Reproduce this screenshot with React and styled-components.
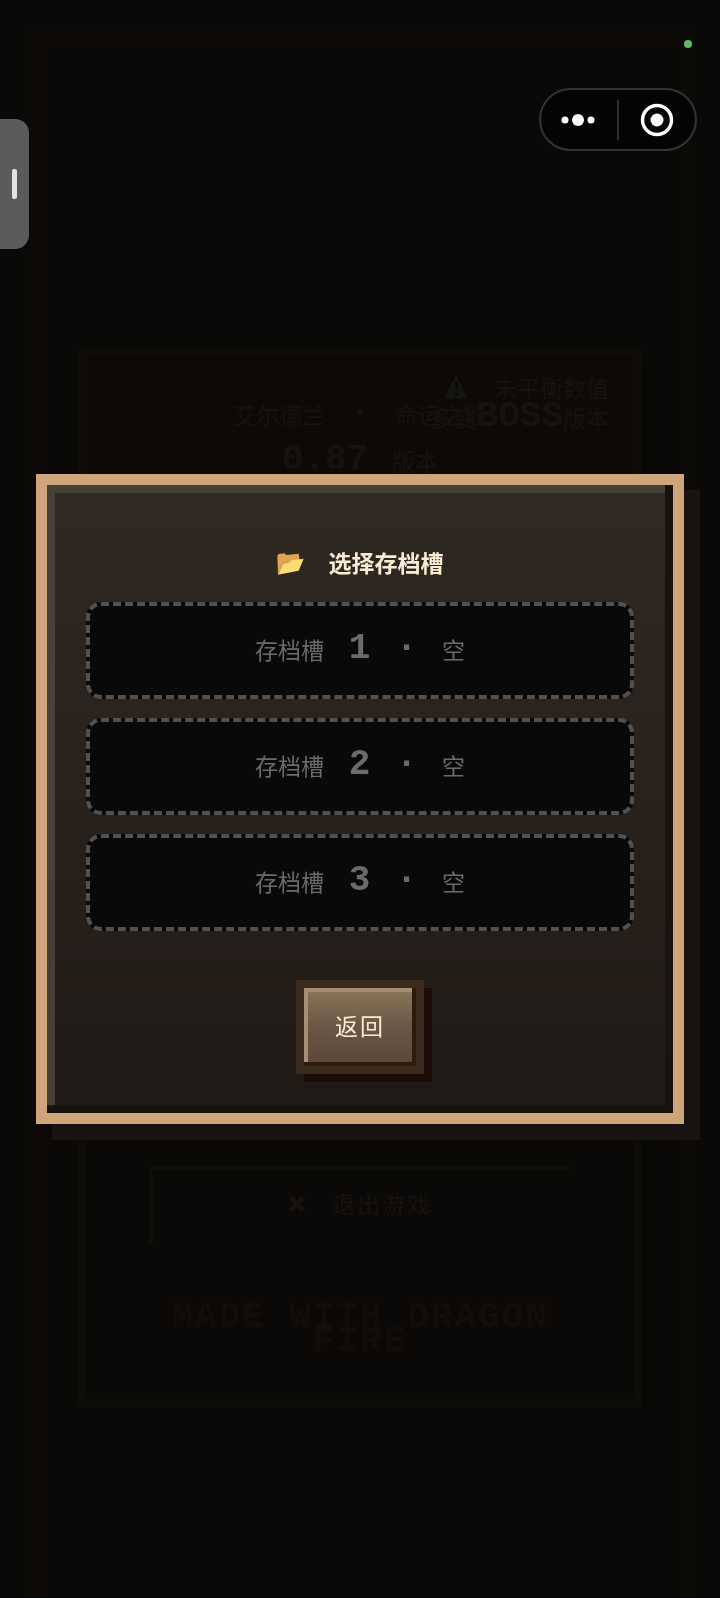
import React from 'react';
import styled, { createGlobalStyle, ThemeProvider } from 'styled-components';

const theme = {
  font: {
    text: "'Noto Sans CJK SC', sans-serif",
    pixel: "'Liberation Mono', 'Noto Sans CJK SC', monospace",
  },
  fontSize: {
    text: '23px',
    pixel: '36px',
  },
  colors: {
    page: '#0a0907',
    ghost: '#15120f',
    gold: '#cea67a',
    cream: '#f9ecd2',
    muted: '#6b6b6b',
  },
};

const GlobalStyle = createGlobalStyle`
  *, *::before, *::after {
    box-sizing: border-box;
  }

  body {
    margin: 0;
    background: #0a0907;
  }

  button {
    margin: 0;
    font: inherit;
    cursor: pointer;
  }
`;

/* ---------- start screen behind the dialog ---------- */

const Page = styled.div`
  min-height: 100vh;
  padding: 31px 30px 0;
  display: flex;
  overflow: hidden;
  background: ${({ theme }) => theme.colors.page};
  color: ${({ theme }) => theme.colors.ghost};
  font-family: ${({ theme }) => theme.font.text};
  font-size: ${({ theme }) => theme.fontSize.text};
`;

const Stage = styled.main`
  flex: 1;
  padding: 308px 40px 191px;
  display: flex;
  border: 8px solid #0d0b08;
  border-bottom: 0;
  box-shadow: inset 8px 8px 0 #0e0906;
`;

const Panel = styled.section`
  position: relative;
  flex: 1;
  padding: 36px 55px 45px;
  display: flex;
  flex-direction: column;
  justify-content: space-between;
  border: 8px solid #0d0c08;
  background: linear-gradient(#0d0906, #0a0907 40%);
  box-shadow: 16px 16px 0 #080807;
`;

const GameTitle = styled.h1`
  margin: 0;
  display: flex;
  flex-direction: column;
  font-size: inherit;
  font-weight: 400;
  line-height: 46px;
`;

const TitleLine = styled.span`
  display: flex;
  justify-content: center;
  align-items: center;
  gap: 24px;
`;

const Pixel = styled.span`
  font-family: ${({ theme }) => theme.font.pixel};
  font-size: ${({ theme }) => theme.fontSize.pixel};
  font-weight: 700;
`;

const VersionBadge = styled.div`
  position: absolute;
  top: 17px;
  right: 25px;
  display: flex;
  flex-direction: column;
  align-items: flex-end;
  line-height: 30px;
`;

const BadgeLine = styled.span`
  display: flex;
  align-items: center;
  gap: ${({ $gap }) => $gap || '0'};
`;

const PanelFooter = styled.footer`
  display: flex;
  flex-direction: column;
  gap: 54px;
`;

const ExitButton = styled.button`
  height: 94px;
  padding: 0 0 4px;
  display: flex;
  justify-content: center;
  align-items: center;
  gap: 26px;
  border: 8px solid #0a0907;
  background: #0a0907;
  color: inherit;
  letter-spacing: 2px;
  box-shadow: inset 4px 4px 0 #0f0e0b, 8px 8px 0 #080807;
`;

const Credit = styled.p`
  margin: 0;
  text-align: center;
  font-family: ${({ theme }) => theme.font.pixel};
  font-size: ${({ theme }) => theme.fontSize.pixel};
  font-weight: 700;
  line-height: 24px;
  letter-spacing: 2px;
  color: #110d0b;
`;

/* ---------- save slot dialog ---------- */

const Overlay = styled.div`
  position: fixed;
  inset: 0;
  padding: 0 36px;
  display: flex;
  align-items: center;
  font-family: ${({ theme }) => theme.font.text};
  font-size: ${({ theme }) => theme.fontSize.text};
`;

const Dialog = styled.div`
  flex: 1;
  padding: 39px;
  display: flex;
  flex-direction: column;
  border: 11px solid ${({ theme }) => theme.colors.gold};
  background: linear-gradient(#302822, #29211b 50%, #1f1a17);
  box-shadow: inset -8px -8px 0 #181310, inset 8px 8px 0 #474036, 16px 16px 0 #191411;
`;

const DialogTitle = styled.h2`
  margin: 20px 0 18px;
  display: flex;
  justify-content: center;
  align-items: center;
  gap: 24px;
  color: ${({ theme }) => theme.colors.cream};
  font-size: inherit;
  font-weight: 700;
  line-height: 36px;
`;

const DialogTitleText = styled.span`
  padding-bottom: 4px;
`;

const SlotList = styled.div`
  display: flex;
  flex-direction: column;
  gap: 19px;
`;

const Slot = styled.button`
  height: 97px;
  padding: 0 0 4px;
  display: flex;
  justify-content: center;
  align-items: center;
  gap: 24px;
  border: 4px dashed #525150;
  border-radius: 15px;
  background: #090909;
  color: ${({ theme }) => theme.colors.muted};
`;

const SlotGlyph = styled(Pixel)`
  width: 23px;
  text-align: center;
`;

const BackButton = styled.button`
  align-self: center;
  height: 94px;
  margin-top: 49px;
  padding: 0 31px 4px;
  border: 8px solid #3a2b1c;
  background: linear-gradient(#8a7757, #6b5747 50%, #594638) padding-box;
  color: ${({ theme }) => theme.colors.cream};
  letter-spacing: 2px;
  box-shadow: inset -4px -4px 0 #2e1c0b, inset 4px 4px 0 #a68f74, 8px 8px 0 #1c0b09;
`;

/* ---------- system chrome ---------- */

const StatusDot = styled.span`
  position: fixed;
  top: 40px;
  right: 28px;
  width: 8px;
  height: 8px;
  border-radius: 50%;
  background: #60ba68;
`;

const Capsule = styled.div`
  position: fixed;
  top: 88px;
  right: 23px;
  width: 158px;
  height: 63px;
  display: flex;
  align-items: center;
  border: 2px solid #353433;
  border-radius: 32px;
  background: #040403;
`;

const CapsuleButton = styled.button`
  flex: 1;
  height: 100%;
  padding: 0;
  display: flex;
  justify-content: center;
  align-items: center;
  border: 0;
  background: none;
`;

const CapsuleDivider = styled.span`
  width: 2px;
  height: 40px;
  background: #2f2e2d;
`;

const Drawer = styled.button`
  position: fixed;
  top: 119px;
  left: 0;
  width: 29px;
  height: 130px;
  padding: 0;
  display: flex;
  justify-content: center;
  align-items: center;
  border: 0;
  border-radius: 0 14px 14px 0;
  background: #5b5b5b;
`;

const DrawerGrip = styled.span`
  width: 5px;
  height: 30px;
  border-radius: 2px;
  background: #e3e3e3;
`;

const FolderIcon = () => (
  <svg width="28" height="24" viewBox="-1 -3 84 72" aria-hidden="true">
    <path d="M0 9 L4 3 L22 1 L27 6 L64 2 L67 22 L40 46 L2 64 Z" fill="#dfa24f" />
    <path d="M16 33 L34 30 L42 22 L79 17 L64 53 L2 65 Z" fill="#fbdb72" />
    <path d="M16 33 L2 65" stroke="#c98c3d" strokeWidth="2" fill="none" />
  </svg>
);

const WarningIcon = () => (
  <svg width="26" height="26" viewBox="0 0 26 26" aria-hidden="true">
    <path d="M13 1 L25 25 H1 Z" fill="#15150f" />
    <path d="M12 8 h3 l-1 9 h-1 Z M12 19 h3 v3 h-3 Z" fill="#0a0805" />
  </svg>
);

const CrossIcon = () => (
  <svg width="18" height="18" viewBox="0 0 18 18" aria-hidden="true">
    <path d="M3 4 L15 16 M15 4 L3 16" stroke="#17120f" strokeWidth="5" />
  </svg>
);

const MoreIcon = () => (
  <svg width="36" height="16" viewBox="0 0 36 16" aria-hidden="true" fill="#fff">
    <circle cx="4" cy="8" r="3.5" />
    <circle cx="17" cy="8" r="6" />
    <circle cx="30" cy="8" r="3.5" />
  </svg>
);

const TargetIcon = () => (
  <svg width="34" height="34" viewBox="0 0 34 34" aria-hidden="true">
    <circle cx="17" cy="17" r="14.5" fill="none" stroke="#fff" strokeWidth="3.4" />
    <circle cx="17" cy="17" r="6.5" fill="#fff" />
  </svg>
);

const slots = [1, 2, 3];

const StartScreen = () => (
  <Page>
    <Stage>
      <Panel>
        <GameTitle>
          <TitleLine>
            <span>艾尔德兰</span>
            <Pixel>·</Pixel>
            <span>命运之骰</span>
          </TitleLine>
          <TitleLine>
            <Pixel>0.87</Pixel>
            <span>版本</span>
          </TitleLine>
        </GameTitle>
        <VersionBadge>
          <BadgeLine $gap="25px">
            <WarningIcon />
            <span>未平衡数值</span>
          </BadgeLine>
          <BadgeLine>
            <span>多变</span>
            <Pixel>BOSS</Pixel>
            <span>版本</span>
          </BadgeLine>
        </VersionBadge>
        <PanelFooter>
          <ExitButton type="button">
            <CrossIcon />
            <span>退出游戏</span>
          </ExitButton>
          <Credit>MADE WITH DRAGON FIRE</Credit>
        </PanelFooter>
      </Panel>
    </Stage>
  </Page>
);

const SaveSlotDialog = () => (
  <Overlay>
    <Dialog role="dialog" aria-modal="true" aria-labelledby="slot-title">
      <DialogTitle id="slot-title">
        <FolderIcon />
        <DialogTitleText>选择存档槽</DialogTitleText>
      </DialogTitle>
      <SlotList>
        {slots.map((slot) => (
          <Slot key={slot} type="button">
            <span>存档槽</span>
            <SlotGlyph>{slot}</SlotGlyph>
            <SlotGlyph>·</SlotGlyph>
            <span>空</span>
          </Slot>
        ))}
      </SlotList>
      <BackButton type="button">返回</BackButton>
    </Dialog>
  </Overlay>
);

const App = () => (
  <ThemeProvider theme={theme}>
    <GlobalStyle />
    <StartScreen />
    <SaveSlotDialog />
    <StatusDot />
    <Capsule>
      <CapsuleButton type="button" aria-label="更多">
        <MoreIcon />
      </CapsuleButton>
      <CapsuleDivider />
      <CapsuleButton type="button" aria-label="关闭">
        <TargetIcon />
      </CapsuleButton>
    </Capsule>
    <Drawer type="button" aria-label="展开">
      <DrawerGrip />
    </Drawer>
  </ThemeProvider>
);

export default App;
